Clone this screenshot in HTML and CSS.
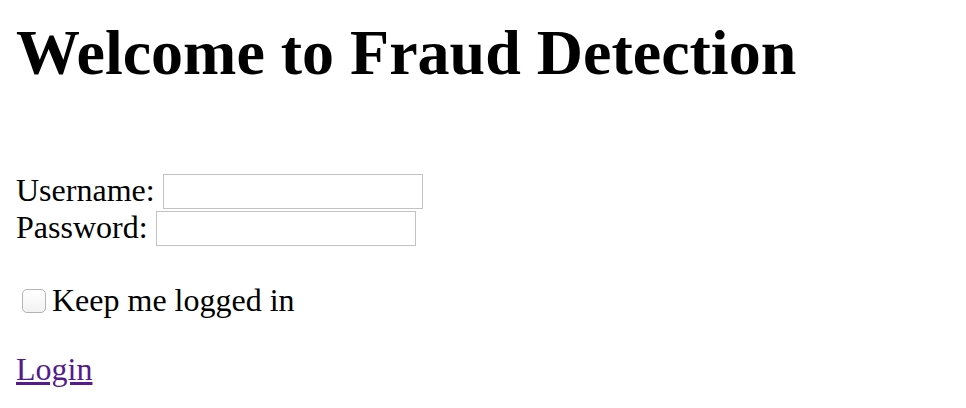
FILE: index.html
```html
<!DOCTYPE html>
<html lang="en">
<head>
<meta charset="utf-8">
<title>Fraud Detection</title>
<link rel="stylesheet" href="styles.css">
</head>
<body>
<h1 class="title">Welcome to Fraud Detection</h1>
<form class="login">
  <div class="field"><label for="u">Username:</label> <input class="text" id="u" type="text"></div>
  <div class="field"><label for="p">Password:</label> <input class="text" id="p" type="password"></div>
  <p class="remember"><input class="check" id="k" type="checkbox"><label for="k">Keep me logged in</label></p>
  <p class="action"><a class="link" href="#">Login</a></p>
</form>
</body>
</html>
```
FILE: styles.css
```css
html, body {
  background: #fff;
}
body {
  margin: 16px;
  font-family: "Liberation Serif", "Times New Roman", serif;
  font-size: 32px;
  color: #000;
}
.title {
  margin: 0 0 82px;
  font-size: 64px;
  font-weight: bold;
  line-height: 74px;
}
.login {
  margin: 0;
}
.field {
  line-height: 37px;
  height: 37px;
}
.text {
  box-sizing: border-box;
  width: 260px;
  height: 35px;
  border: 1px solid #c2c2c2;
  background: #fff;
  padding: 0 4px;
  font: 16px "Liberation Sans", sans-serif;
  vertical-align: 5px;
  margin: 0;
}
.remember {
  margin: 36px 0 0;
  line-height: 37px;
  display: flex;
  align-items: center;
}
.check {
  appearance: none;
  -webkit-appearance: none;
  box-sizing: border-box;
  width: 24px;
  height: 24px;
  margin: 0 6px 0 6px;
  border: 1px solid #b4b4b4;
  border-radius: 5px;
  background: linear-gradient(#fff, #f2f2f2);
}
.action {
  margin: 32px 0 0;
  line-height: 37px;
}
.link {
  color: #551a8b;
  text-decoration: underline;
}
```
